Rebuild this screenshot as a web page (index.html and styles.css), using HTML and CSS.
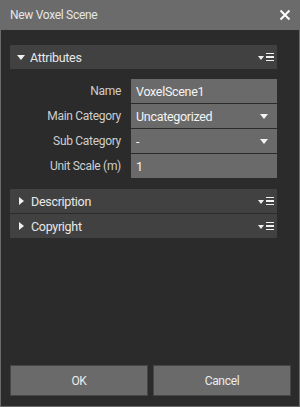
FILE: index.html
```html
<!DOCTYPE html>
<html>
<head>
<meta charset="UTF-8">
<link rel="stylesheet" href="styles.css">
</head>
<body>
<div class="dialog">
	<div class="titlebar">
		<span class="title">New Voxel Scene</span>
		<svg class="close" width="12" height="12" viewBox="0 0 12 12"><path d="M1.5 1.5L10.5 10.5M10.5 1.5L1.5 10.5" stroke="#fff" stroke-width="2"/></svg>
	</div>
	<div class="content">
		<div class="section open">
			<div class="head">
				<span class="arrow down"></span>
				<span class="label">Attributes</span>
				<span class="menu"><i></i><b><em></em><em></em><em></em></b></span>
			</div>
			<div class="fields">
				<div class="row"><span class="name">Name</span><div class="field">VoxelScene1</div></div>
				<div class="row"><span class="name">Main Category</span><div class="field select">Uncategorized<i></i></div></div>
				<div class="row"><span class="name">Sub Category</span><div class="field select">-<i></i></div></div>
				<div class="row"><span class="name">Unit Scale (m)</span><div class="field">1</div></div>
			</div>
		</div>
		<div class="section">
			<div class="head">
				<span class="arrow right"></span>
				<span class="label">Description</span>
				<span class="menu"><i></i><b><em></em><em></em><em></em></b></span>
			</div>
		</div>
		<div class="section">
			<div class="head">
				<span class="arrow right"></span>
				<span class="label">Copyright</span>
				<span class="menu"><i></i><b><em></em><em></em><em></em></b></span>
			</div>
		</div>
	</div>
	<div class="buttons">
		<div class="btn ok">OK</div>
		<div class="btn cancel">Cancel</div>
	</div>
</div>
</body>
</html>
```

FILE: styles.css
```css
*{
	box-sizing:border-box;
}
html,body{
	margin:0;
	padding:0;
	background:#2b2b2b;
}
body{
	font-family:Roboto, "Liberation Sans", sans-serif;
	font-size:12px;
	letter-spacing:-0.3px;
	color:#e8e8e8;
}
.dialog{
	width:300px;
	height:407px;
	display:flex;
	flex-direction:column;
	background:#2b2b2b;
	border:1px solid #6b6b6b;
	border-top:0;
}
.titlebar{
	height:30px;
	margin:0 -1px;
	background:#6b6b6b;
	display:flex;
	align-items:center;
	justify-content:space-between;
	padding:0 9px 0 10px;
	flex-shrink:0;
}
.title{
	color:#e6e6e6;
}
.close{
	display:block;
}
.content{
	flex:1;
	padding:15px 22px 0 9px;
}
.section + .section{
	margin-top:1px;
}
.section.open{
	margin-bottom:11px;
}
.head{
	height:24px;
	background:#414141;
	display:flex;
	align-items:center;
	padding:0 3px 0 7px;
	color:#e8e8e8;
	font-size:12.5px;
}
.arrow{
	width:0;
	height:0;
}
.arrow.down{
	border-left:4.5px solid transparent;
	border-right:4.5px solid transparent;
	border-top:5px solid #f0f0f0;
	margin-right:5px;
}
.arrow.right{
	border-top:4.5px solid transparent;
	border-bottom:4.5px solid transparent;
	border-left:5px solid #f0f0f0;
	margin-left:2px;
	margin-right:7px;
}
.label{
	flex:1;
}
.menu{
	display:flex;
	align-items:center;
	gap:2px;
}
.menu i{
	width:0;
	height:0;
	border-left:3.5px solid transparent;
	border-right:3.5px solid transparent;
	border-top:4px solid #f0f0f0;
	margin-top:1px;
}
.menu b{
	display:flex;
	flex-direction:column;
	gap:2.5px;
}
.menu em{
	display:block;
	width:8px;
	height:1.2px;
	background:#f0f0f0;
}
.fields{
	margin-top:10px;
	display:flex;
	flex-direction:column;
	gap:1px;
}
.row{
	display:flex;
	align-items:center;
	height:24px;
}
.name{
	width:111px;
	text-align:right;
	color:#cfcfcf;
	margin-right:10px;
}
.field{
	flex:1;
	height:24px;
	background:#6a6a6a;
	color:#f4f4f4;
	display:flex;
	align-items:center;
	padding:0 5px;
	font-size:12.5px;
}
.select{
	justify-content:space-between;
}
.select i{
	width:0;
	height:0;
	border-left:4.5px solid transparent;
	border-right:4.5px solid transparent;
	border-top:5px solid #f4f4f4;
	margin-right:4px;
}
.buttons{
	display:flex;
	gap:5px;
	padding:0 8px 10px 9px;
}
.btn{
	height:31px;
	background:#6a6a6a;
	border:1px solid #464646;
	display:flex;
	align-items:center;
	justify-content:center;
	color:#ececec;
}
.ok{
	width:138px;
}
.cancel{
	flex:1;
}
```
